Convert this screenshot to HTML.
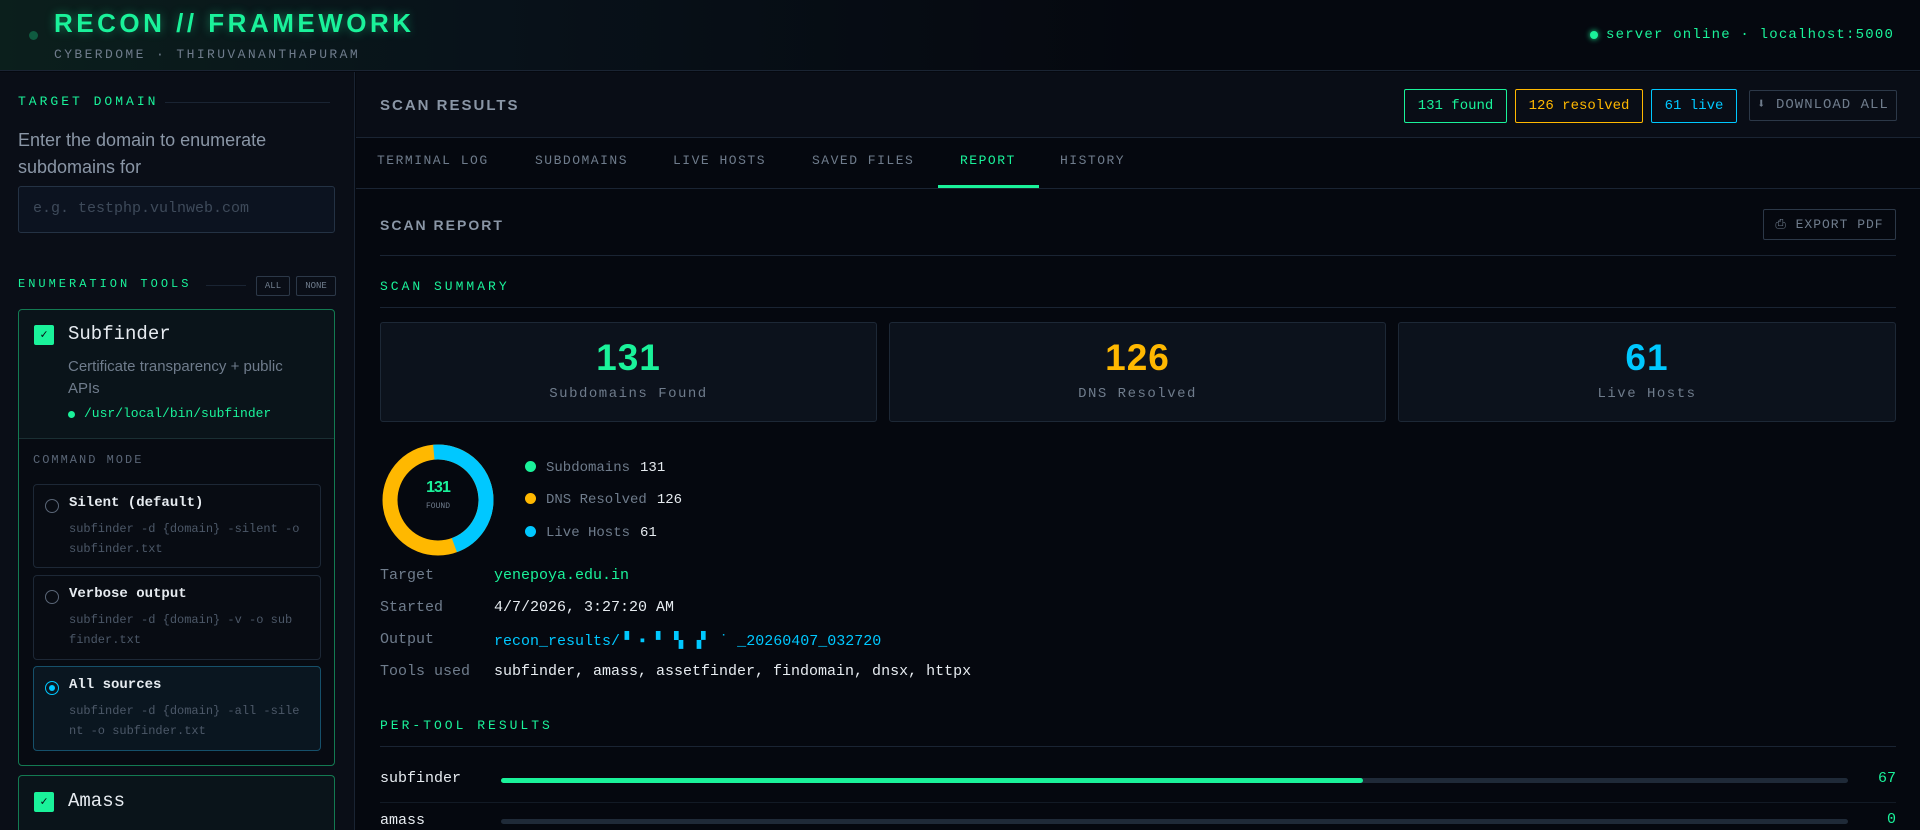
<!DOCTYPE html>
<html><head><meta charset="utf-8"><style>
*{box-sizing:border-box;margin:0;padding:0}
html{width:1920px;height:830px;overflow:hidden}
body{width:1920px;height:830px;overflow:hidden;background:#05080f;font-family:"Liberation Mono",monospace;color:#8a96a6;position:relative}
.abs{position:absolute}
.hdr{left:0;top:0;width:1920px;height:71px;border-bottom:1px solid #1a2433;background:linear-gradient(90deg,#0b1f1c 0%,#08121a 25%,#05080f 60%)}
.title{left:54px;top:8px;font-family:"Liberation Sans",sans-serif;font-weight:bold;font-size:26px;letter-spacing:3.5px;color:#1af29a;text-shadow:0 0 10px rgba(26,242,154,.45)}
.sub{left:54px;top:47px;font-size:13px;letter-spacing:2.4px;color:#6f7c8c}
.side{left:0;top:72px;width:355px;height:758px;background:#0a0e17;border-right:1px solid #1a2433}
.sec{font-size:13px;letter-spacing:3px;color:#1af29a}
.card{border:1px solid #137a52;border-radius:4px;background:#0a141a}
.opt{left:33px;width:288px;border:1px solid #1d2836;border-radius:4px;background:#080c13}
.opt .t{position:absolute;left:35px;top:10px;font-size:14px;color:#e6ebf0;font-weight:bold}
.opt .c{position:absolute;left:35px;top:34px;font-size:12px;line-height:20px;color:#4c5868;width:250px}
.rad{position:absolute;left:11px;top:14px;width:14px;height:14px;border:1px solid #5a6677;border-radius:50%}
.chk{width:20px;height:20px;background:#1af29a;border-radius:2px;color:#05080f;font-size:12px;text-align:center;line-height:20px;font-weight:bold}
.badge{top:89px;height:34px;border:1px solid;border-radius:2px;font-size:14px;line-height:32px;text-align:center}
.tab{top:153px;font-size:13px;letter-spacing:1.5px;color:#6f7c8c}
.hd2{font-family:"Liberation Sans",sans-serif;font-weight:bold;font-size:15px;letter-spacing:2px;color:#8a96a6}
.stat{top:322px;height:100px;border:1px solid #1d2836;border-radius:3px;background:#0c121c;text-align:center}
.stat .n{position:absolute;left:0;right:0;top:14px;font-family:"Liberation Sans",sans-serif;font-weight:bold;font-size:37px;letter-spacing:1px}
.stat .l{position:absolute;left:0;right:0;top:63px;font-size:14px;letter-spacing:1.5px;color:#6f7c8c}
.lg{left:525px;font-size:14px;color:#6f7c8c}
.lg i{display:inline-block;width:11px;height:11px;border-radius:50%;margin-right:10px;vertical-align:-1px}
.lg b{color:#e6ebf0;font-weight:normal;margin-left:10px}
.dl{left:380px;font-size:15px;color:#6f7c8c}
.dv{left:494px;font-size:15px}
.line{height:1px;background:#1a2433}
</style></head><body>
<div class="abs hdr"></div>
<div class="abs" style="left:29px;top:31px;width:9px;height:9px;border-radius:50%;background:#0f5b40"></div>
<div class="abs title">RECON // FRAMEWORK</div>
<div class="abs sub">CYBERDOME · THIRUVANANTHAPURAM</div>
<div class="abs" style="left:1590px;top:31px;width:8px;height:8px;border-radius:50%;background:#1af29a;box-shadow:0 0 6px #1af29a"></div>
<div class="abs" style="left:1606px;top:27px;font-size:14px;letter-spacing:1.2px;color:#1af29a">server online · localhost:5000</div>

<div class="abs side"></div>
<div class="abs sec" style="left:18px;top:94px">TARGET DOMAIN</div>
<div class="abs line" style="left:165px;top:102px;width:165px"></div>
<div class="abs" style="left:18px;top:127px;font-family:'Liberation Sans',sans-serif;font-size:18px;line-height:27px;color:#8a96a6;width:300px">Enter the domain to enumerate subdomains for</div>
<div class="abs" style="left:18px;top:186px;width:317px;height:47px;border:1px solid #243244;border-radius:3px;background:#0c1320;padding:13px 14px;font-size:15px;color:#3e4a5a">e.g.  testphp.vulnweb.com</div>
<div class="abs sec" style="left:18px;top:277px;font-size:12px">ENUMERATION TOOLS</div>
<div class="abs line" style="left:206px;top:285px;width:40px"></div>
<div class="abs" style="left:256px;top:276px;width:34px;height:20px;border:1px solid #2c3848;border-radius:2px;font-size:9px;line-height:18px;text-align:center;color:#6f7c8c">ALL</div>
<div class="abs" style="left:296px;top:276px;width:40px;height:20px;border:1px solid #2c3848;border-radius:2px;font-size:9px;line-height:18px;text-align:center;color:#6f7c8c">NONE</div>

<div class="abs card" style="left:18px;top:309px;width:317px;height:457px"></div>
<div class="abs" style="left:19px;top:438px;width:315px;height:327px;background:#070b12;border-top:1px solid #1a2f33;border-radius:0 0 4px 4px"></div>
<div class="abs chk" style="left:34px;top:325px">✓</div>
<div class="abs" style="left:68px;top:323px;font-size:19px;color:#e6ebf0">Subfinder</div>
<div class="abs" style="left:68px;top:356px;font-family:'Liberation Sans',sans-serif;font-size:15px;line-height:22px;color:#6f7c8c;width:240px">Certificate transparency + public APIs</div>
<div class="abs" style="left:68px;top:411px;width:7px;height:7px;border-radius:50%;background:#1af29a"></div>
<div class="abs" style="left:84px;top:406px;font-size:13px;color:#1af29a">/usr/local/bin/subfinder</div>
<div class="abs" style="left:33px;top:453px;font-size:12px;letter-spacing:2px;color:#5a6677">COMMAND MODE</div>
<div class="abs opt" style="top:484px;height:84px"><div class="rad"></div><div class="t">Silent (default)</div><div class="c">subfinder -d {domain} -silent -o subfinder.txt</div></div>
<div class="abs opt" style="top:575px;height:85px"><div class="rad"></div><div class="t">Verbose output</div><div class="c">subfinder -d {domain} -v -o sub finder.txt</div></div>
<div class="abs opt" style="top:666px;height:85px;border-color:#16506a;background:#0a1620"><div class="rad" style="border-color:#00c8ff"><div style="position:absolute;left:3px;top:3px;width:6px;height:6px;border-radius:50%;background:#00c8ff"></div></div><div class="t">All sources</div><div class="c">subfinder -d {domain} -all -sile nt -o subfinder.txt</div></div>
<div class="abs card" style="left:18px;top:775px;width:317px;height:55px;border-bottom:none;border-radius:4px 4px 0 0"></div>
<div class="abs chk" style="left:34px;top:792px">✓</div>
<div class="abs" style="left:68px;top:790px;font-size:19px;color:#e6ebf0">Amass</div>

<div class="abs" style="left:356px;top:72px;width:1564px;height:65px;background:#090d16"></div>
<div class="abs hd2" style="left:380px;top:97px">SCAN RESULTS</div>
<div class="abs badge" style="left:1404px;width:103px;border-color:#1af29a;color:#1af29a">131 found</div>
<div class="abs badge" style="left:1515px;width:128px;border-color:#ffb800;color:#ffb800">126 resolved</div>
<div class="abs badge" style="left:1651px;width:86px;border-color:#00c8ff;color:#00c8ff">61 live</div>
<div class="abs badge" style="left:1749px;top:90px;height:31px;width:148px;border-color:#2c3848;color:#6f7c8c;line-height:29px;letter-spacing:1px">⬇ DOWNLOAD ALL</div>
<div class="abs line" style="left:356px;top:137px;width:1564px"></div>
<div class="abs tab" style="left:377px">TERMINAL LOG</div>
<div class="abs tab" style="left:535px">SUBDOMAINS</div>
<div class="abs tab" style="left:673px">LIVE HOSTS</div>
<div class="abs tab" style="left:812px">SAVED FILES</div>
<div class="abs tab" style="left:960px;color:#1af29a">REPORT</div>
<div class="abs tab" style="left:1060px">HISTORY</div>
<div class="abs" style="left:938px;top:185px;width:101px;height:3px;background:#1af29a"></div>
<div class="abs line" style="left:356px;top:188px;width:1564px"></div>

<div class="abs hd2" style="left:380px;top:217px;font-size:14px">SCAN REPORT</div>
<div class="abs" style="left:1763px;top:209px;width:133px;height:31px;border:1px solid #2c3848;border-radius:2px;font-size:13px;line-height:29px;text-align:center;color:#6f7c8c;letter-spacing:1px">⎙ EXPORT PDF</div>
<div class="abs line" style="left:380px;top:255px;width:1516px"></div>
<div class="abs sec" style="left:380px;top:279px">SCAN SUMMARY</div>
<div class="abs line" style="left:380px;top:307px;width:1516px"></div>
<div class="abs stat" style="left:380px;width:497px"><div class="n" style="color:#1af29a">131</div><div class="l">Subdomains Found</div></div>
<div class="abs stat" style="left:889px;width:497px"><div class="n" style="color:#ffb800">126</div><div class="l">DNS Resolved</div></div>
<div class="abs stat" style="left:1398px;width:498px"><div class="n" style="color:#00c8ff">61</div><div class="l">Live Hosts</div></div>

<svg class="abs" style="left:382px;top:444px" width="112" height="112" viewBox="0 0 112 112">
<circle cx="56" cy="56" r="48" fill="none" stroke="#ffb800" stroke-width="15"/>
<circle cx="56" cy="56" r="48" fill="none" stroke="#00c8ff" stroke-width="15" stroke-dasharray="138 400" transform="rotate(-95 56 56)"/>
</svg>
<div class="abs" style="left:413px;top:479px;width:50px;text-align:center;font-family:'Liberation Sans',sans-serif;font-weight:bold;font-size:16px;color:#1af29a;letter-spacing:-1px">131</div>
<div class="abs" style="left:413px;top:502px;width:50px;text-align:center;font-size:8px;color:#6f7c8c">FOUND</div>
<div class="abs lg" style="top:460px"><i style="background:#1af29a"></i>Subdomains<b>131</b></div>
<div class="abs lg" style="top:492px"><i style="background:#ffb800"></i>DNS Resolved<b>126</b></div>
<div class="abs lg" style="top:525px"><i style="background:#00c8ff"></i>Live Hosts<b>61</b></div>

<div class="abs dl" style="top:567px">Target</div><div class="abs dv" style="top:567px;color:#1af29a">yenepoya.edu.in</div>
<div class="abs dl" style="top:599px">Started</div><div class="abs dv" style="top:599px;color:#e6ebf0">4/7/2026, 3:27:20 AM</div>
<div class="abs dl" style="top:631px">Output</div><div class="abs dv" style="top:631px;color:#00c8ff">recon_results/▝ ▪ ▘ ▚ ▗▘  ˙ _20260407_032720</div>
<div class="abs dl" style="top:663px">Tools used</div><div class="abs dv" style="top:663px;color:#e6ebf0">subfinder, amass, assetfinder, findomain, dnsx, httpx</div>

<div class="abs sec" style="left:380px;top:718px">PER-TOOL RESULTS</div>
<div class="abs line" style="left:380px;top:746px;width:1516px"></div>
<div class="abs" style="left:380px;top:770px;font-size:15px;color:#e6ebf0">subfinder</div>
<div class="abs" style="left:501px;top:778px;width:1347px;height:5px;border-radius:3px;background:#1f2a38"></div>
<div class="abs" style="left:501px;top:778px;width:862px;height:5px;border-radius:3px;background:#1af29a"></div>
<div class="abs" style="left:1860px;top:770px;width:36px;text-align:right;font-size:15px;color:#1af29a">67</div>
<div class="abs" style="left:380px;top:802px;width:1516px;height:1px;background:#121a25"></div>
<div class="abs" style="left:380px;top:812px;font-size:15px;color:#e6ebf0">amass</div>
<div class="abs" style="left:501px;top:819px;width:1347px;height:5px;border-radius:3px;background:#1f2a38"></div>
<div class="abs" style="left:1860px;top:811px;width:36px;text-align:right;font-size:15px;color:#1af29a">0</div>
</body></html>
